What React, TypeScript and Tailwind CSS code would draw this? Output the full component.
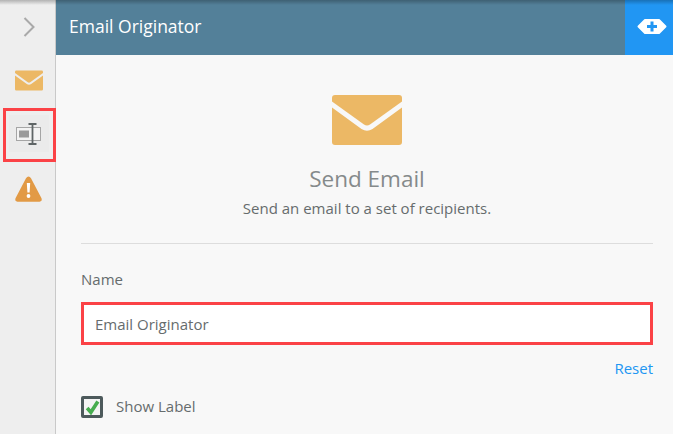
import React from 'react';

const Envelope = ({ className }: { className: string }) => (
  <svg viewBox="0 0 70 50" className={className}>
    <path d="M3 0h64a3 3 0 0 1 3 3v3.500L38 29.500q-3 2-6 0L0 6.500V3a3 3 0 0 1 3-3z" fill="#ecb865" />
    <path d="M0 12.500l29.500 21.500q5.500 3.500 11 0L70 12.500V47a3 3 0 0 1-3 3H3a3 3 0 0 1-3-3z" fill="#ecb865" />
  </svg>
);

const App: React.FC = () => {
  return (
    <div className="relative flex h-[434px] w-[673px] overflow-hidden bg-[#f8f8f8] font-['Open_Sans',sans-serif]">
      <div className="flex w-[56px] shrink-0 flex-col items-center border-r border-r-[#c9c9c9] bg-[#eeeeee]">
        <svg viewBox="0 0 12 20" className="mt-[17px] ml-[3px] h-[20px] w-[12px]" fill="none" stroke="#a9a9a9" strokeWidth="2">
          <path d="M1.500 1l9 9-9 9" />
        </svg>
        <Envelope className="mt-[33px] ml-[3px] h-[21px] w-[28px]" />
        <div className="relative z-10 mt-[17px] ml-[3px] h-[54px] w-[53px] self-start border-[3px] border-[#fb4246] pt-[4px] pl-[3px]">
          <div className="flex h-[37px] w-[40px] items-center justify-center bg-[#ebebeb]">
            <svg viewBox="0 0 26 22" className="h-[22px] w-[26px]">
              <rect x="0.500" y="4.500" width="24" height="13" fill="#f3f3f3" stroke="#a5a5a5" />
              <rect x="3" y="7.500" width="10" height="7" fill="#9a9a9a" />
              <path d="M12.500 1h8M16.500 1v20M12.500 21h8" stroke="#5f6566" strokeWidth="1.800" fill="none" />
            </svg>
          </div>
        </div>
        <svg viewBox="0 0 28 28" className="mt-[13px] ml-[2px] h-[28px] w-[29px]">
          <path d="M14 1.500q1.500 0 2.500 1.700l10.500 20q1 3-2 3.500H3q-3-.5-2-3.500l10.500-20q1-1.700 2.500-1.700z" fill="#e29a45" />
          <path d="M12.300 8h3.400l-.6 9.500h-2.200z" fill="#fff" />
          <circle cx="14" cy="21" r="1.900" fill="#fff" />
        </svg>
      </div>

      <div className="flex min-w-0 flex-1 flex-col">
        <div className="flex h-[55px] shrink-0 items-center justify-between bg-[#538099]">
          <span className="mb-[2px] ml-[13px] text-[17.500px] font-medium text-white">Email Originator</span>
          <div className="flex h-full w-[48px] items-center justify-center bg-[#2196f3]">
            <svg viewBox="0 0 30 15" className="mb-[2px] ml-[6px] h-[15px] w-[30px]">
              <path d="M8 1h14l6.500 6.500L22 14H8L1.500 7.500z" fill="#fff" stroke="#fff" strokeWidth="2" strokeLinejoin="round" />
              <path d="M15 2.500v10M10 7.500h10" stroke="#2196f3" strokeWidth="3" />
            </svg>
          </div>
        </div>

        <div className="flex flex-1 flex-col pr-[20px] pl-[25px]">
          <div className="flex flex-col items-center border-b border-b-[#dddddd] pb-[25px]">
            <Envelope className="mt-[40px] h-[50px] w-[70px]" />
            <div className="mt-[18px] text-[22.500px] leading-[32px] text-[#858a8b]">Send Email</div>
            <div className="mt-[3px] text-[15px] leading-[20px] text-[#666c6d]">Send an email to a set of recipients.</div>
          </div>
          <div className="mt-[25px] text-[15px] leading-[20px] text-[#666c6d]">Name</div>
          <div className="mt-[13px] flex h-[43px] items-center border-[3px] border-[#fb4246] bg-white pt-[1px] pl-[11px] text-[15px] text-[#666c6d]">
            Email Originator
          </div>
          <div className="mt-[13px] text-right text-[15px] leading-[20px] text-[#2196f3]">Reset</div>
          <div className="mt-[17px] flex items-center">
            <div className="flex h-[22px] w-[22px] items-center justify-center rounded-[2px] border-[3px] border-[#4d5a5c] bg-[#f4f4f4]">
              <svg viewBox="0 0 14 14" className="h-[15px] w-[15px]" fill="none" stroke="#47ad4f" strokeWidth="3.400">
                <path d="M2 7.500l3.500 4L12 1.500" />
              </svg>
            </div>
            <span className="mb-[2px] ml-[13px] text-[15px] text-[#666c6d]">Show Label</span>
          </div>
        </div>
      </div>

      <div className="absolute inset-x-0 top-0 z-20 h-[5px] bg-gradient-to-b from-black/25 to-transparent" />
    </div>
  );
};

export default App;
